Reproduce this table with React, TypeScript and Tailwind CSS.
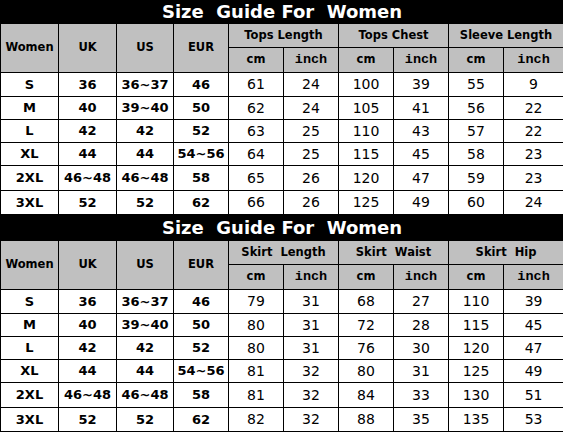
const cols = ["w-[58px]", "w-[58px]", "w-[57px]", "w-[55px]", "w-[55px]", "w-[55px]", "w-[55px]", "w-[55px]", "w-[55px]", "w-[60px]"];
const rowHeights = ["h-[24px]", "h-[23px]", "h-[23px]", "h-[23px]", "h-[25px]", "h-[24px]"];

const sizes = [
  ["S", "36", "36~37", "46"],
  ["M", "40", "39~40", "50"],
  ["L", "42", "42", "52"],
  ["XL", "44", "44", "54~56"],
  ["2XL", "46~48", "46~48", "58"],
  ["3XL", "52", "52", "62"],
];

const tops = [
  ["61", "24", "100", "39", "55", "9"],
  ["62", "24", "105", "41", "56", "22"],
  ["63", "25", "110", "43", "57", "22"],
  ["64", "25", "115", "45", "58", "23"],
  ["65", "26", "120", "47", "59", "23"],
  ["66", "26", "125", "49", "60", "24"],
];

const skirts = [
  ["79", "31", "68", "27", "110", "39"],
  ["80", "31", "72", "28", "115", "45"],
  ["80", "31", "76", "30", "120", "47"],
  ["81", "32", "80", "31", "125", "49"],
  ["81", "32", "84", "33", "130", "51"],
  ["82", "32", "88", "35", "135", "53"],
];

const gothic = "[font-family:'DejaVu_Sans',sans-serif]";
const courier = "[font-family:'Liberation_Mono','Courier_New',monospace]";

function SizeTable({ groups, data, barHeight }: { groups: string[]; data: string[][]; barHeight: string }) {
  return (
    <table className="w-[563px] table-fixed border-collapse text-black">
      <colgroup>
        {cols.map((c, i) => (
          <col key={i} className={c} />
        ))}
      </colgroup>
      <thead>
        <tr className={`${barHeight} bg-black`}>
          <th colSpan={10} className={`${gothic} whitespace-pre border border-black p-0 text-center text-[18px] font-bold leading-none text-white`}>
            {"Size  Guide For  Women"}
          </th>
        </tr>
        <tr className="h-[24px] bg-[#c0c0c0]">
          {["Women", "UK", "US", "EUR"].map((h) => (
            <th key={h} rowSpan={2} className={`${gothic} border border-black p-0 text-[11.5px] font-bold`}>
              {h}
            </th>
          ))}
          {groups.map((g) => (
            <th key={g} colSpan={2} className={`${gothic} whitespace-pre border border-black p-0 text-[11.5px] font-bold`}>
              {g}
            </th>
          ))}
        </tr>
        <tr className="h-[25px] bg-[#c0c0c0]">
          {groups.map((g) => [
            <th key={g + "cm"} className={`${gothic} border border-black p-0 text-[11.5px] font-bold`}>
              cm
            </th>,
            <th key={g + "in"} className={`${courier} border border-black p-0 text-[13.5px] font-bold`}>
              inch
            </th>,
          ])}
        </tr>
      </thead>
      <tbody>
        {sizes.map((s, r) => (
          <tr key={s[0]} className={`${rowHeights[r]} bg-white`}>
            {s.map((v, i) => (
              <td key={i} className={`${gothic} border border-black p-0 text-center text-[13px] font-bold`}>
                {v}
              </td>
            ))}
            {data[r].map((v, i) => (
              <td key={"d" + i} className={`${gothic} border border-black p-0 text-center text-[14px] font-normal text-black`}>
                {v}
              </td>
            ))}
          </tr>
        ))}
      </tbody>
    </table>
  );
}

export default function App() {
  return (
    <div className="flex h-[434px] w-[563px] flex-col overflow-hidden bg-white">
      <SizeTable groups={["Tops Length", "Tops Chest", "Sleeve Length"]} data={tops} barHeight="h-[23px]" />
      <SizeTable groups={["Skirt  Length", "Skirt  Waist", "Skirt  Hip"]} data={skirts} barHeight="h-[25px]" />
    </div>
  );
}
